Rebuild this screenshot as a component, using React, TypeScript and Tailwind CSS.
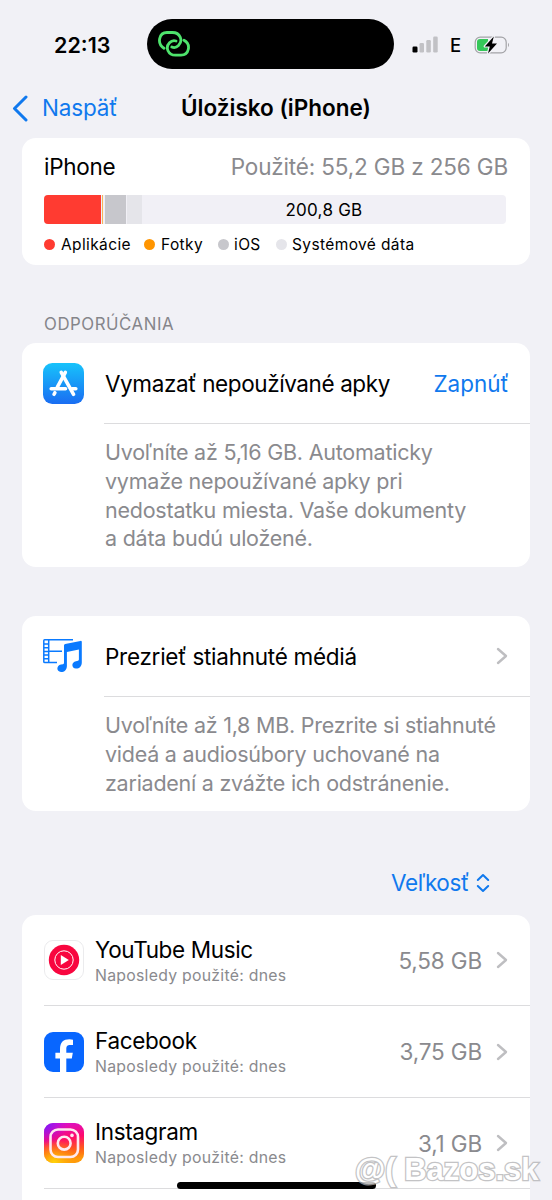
import React from 'react';

interface AppEntry {
    name: string;
    size: string;
    icon: React.ReactNode;
}

interface ChevronProps {
    className?: string;
}

const Chevron: React.FC<ChevronProps> = ({ className = '' }) => (
    <svg className={`h-[18px] w-[12px] shrink-0 ${className}`} viewBox="0 0 12 18" fill="none">
        <path d="M2 2 L10 9 L2 16" stroke="#bebec1" strokeWidth="2.4" strokeLinecap="round" strokeLinejoin="round" />
    </svg>
);

const AppStoreIcon: React.FC = () => (
    <svg className="-ml-px h-[41px] w-[41px] shrink-0" viewBox="0 0 40 40" fill="none">
        <defs>
            <linearGradient id="store" x1="0" y1="0" x2="0" y2="1">
                <stop offset="0" stopColor="#17c3fb" />
                <stop offset="1" stopColor="#1a6df2" />
            </linearGradient>
        </defs>
        <rect width="40" height="40" rx="9" fill="url(#store)" />
        <g stroke="#fff" strokeWidth="3.5" strokeLinecap="round">
            <path d="M21.8 9.2 L14 23.5" />
            <path d="M17.8 9.2 L29.8 30.5" />
            <path d="M8 25.2 H22" />
            <path d="M28.2 25.2 H32" />
            <path d="M11.6 29 L10.8 30.5" />
        </g>
    </svg>
);

const MediaIcon: React.FC = () => (
    <svg className="-ml-px mr-px h-10 w-10 shrink-0" viewBox="0 0 40 40" fill="none">
        <g stroke="#0a7aff" strokeWidth="1.5">
            <path d="M30 3.8 H1.6 Q0.8 3.8 0.8 4.8 V25.7 Q0.8 26.6 1.8 26.6 H14" />
            <path d="M5.7 4 V26.5 M5.7 15.2 H19" />
            <path d="M1 8 H5.7 M1 11.7 H5.7 M1 15.4 H5.7 M1 19.1 H5.7 M1 22.8 H5.7" />
        </g>
        <path d="M21 9.4 Q21 8.2 22.2 7.9 L37.4 4.9 Q38.8 4.7 38.8 6 V26.5 C38.8 30.4 36.3 32.7 33 32.6 C28.2 32.2 28.2 26 33 25.2 L35 24.8 Q35.9 24.5 35.9 23.5 V13.6 L23.9 16.1 V30 C23.9 33.8 21.3 36.2 18 36.1 C13.2 35.7 13.2 29.5 18 28.6 L20 28.2 Q21 27.9 21 26.8 Z" fill="#0a7aff" />
    </svg>
);

const YouTubeMusicIcon: React.FC = () => (
    <svg className="h-10 w-10 shrink-0" viewBox="0 0 40 40" fill="none">
        <rect x="0.5" y="0.5" width="39" height="39" rx="8.5" fill="#fff" stroke="#ebebed" />
        <circle cx="20" cy="20" r="15.2" fill="#f8063f" />
        <circle cx="20" cy="20" r="9.2" stroke="#fff" strokeWidth="1" />
        <path d="M16.8 15 L24.8 20 L16.8 25 Z" fill="#fff" />
    </svg>
);

const FacebookIcon: React.FC = () => (
    <svg className="h-10 w-10 shrink-0" viewBox="0 0 40 40">
        <rect width="40" height="40" rx="9" fill="#0866ff" />
        <path d="M16 40 V26.4 H11.4 V20.7 H16 V17.5 C16 10.2 19.5 7.3 25.4 7.3 Q27.5 7.3 29 7.7 V12.9 H26.4 C23.2 12.9 22.3 14.2 22.3 17.2 V20.7 H28.8 L27.8 26.4 H22.3 V40 Z" fill="#fff" />
    </svg>
);

const InstagramIcon: React.FC = () => (
    <svg className="h-10 w-10 shrink-0" viewBox="0 0 40 40" fill="none">
        <defs>
            <linearGradient id="ig-base" x1="0" y1="0" x2="0.15" y2="1">
                <stop offset="0" stopColor="#d411d8" />
                <stop offset="0.45" stopColor="#ff0a6c" />
                <stop offset="0.75" stopColor="#ff5a1c" />
                <stop offset="1" stopColor="#ff9a0a" />
            </linearGradient>
            <radialGradient id="ig-violet" cx="0" cy="0" r="0.6">
                <stop offset="0" stopColor="#6a1cff" />
                <stop offset="1" stopColor="#b010f0" stopOpacity="0" />
            </radialGradient>
            <radialGradient id="ig-yellow" cx="0.25" cy="1" r="0.6">
                <stop offset="0" stopColor="#ffd60a" />
                <stop offset="1" stopColor="#ff9a0a" stopOpacity="0" />
            </radialGradient>
        </defs>
        <rect width="40" height="40" rx="9" fill="url(#ig-base)" />
        <rect width="40" height="40" rx="9" fill="url(#ig-violet)" />
        <rect width="40" height="40" rx="9" fill="url(#ig-yellow)" />
        <rect x="6.5" y="6.5" width="27.5" height="27.5" rx="7.5" stroke="#ffe9f0" strokeWidth="2.6" />
        <circle cx="20.2" cy="20.2" r="6.4" stroke="#ffe9f0" strokeWidth="2.6" />
        <circle cx="28" cy="12.4" r="1.8" fill="#ffe9f0" />
    </svg>
);

const apps: AppEntry[] = [
    { name: 'YouTube Music', size: '5,58 GB', icon: <YouTubeMusicIcon /> },
    { name: 'Facebook', size: '3,75 GB', icon: <FacebookIcon /> },
    { name: 'Instagram', size: '3,1 GB', icon: <InstagramIcon /> },
];

const StatusBar: React.FC = () => (
    <div className="flex h-[50px] items-center">
        <span className="ml-[54px] w-[93px] pt-0.5 text-[21.5px] font-semibold">22:13</span>
        <div className="flex h-[50px] w-[247px] items-center rounded-full bg-black pl-[11px]">
            <svg className="h-[26px] w-8" viewBox="0 0 32 26" fill="none" stroke="#4ee36c" strokeWidth="2.8" strokeLinecap="round">
                <path d="M6 17.3 C-1.5 12.5 1 1.5 9 1.5 H14.5 C22 1.5 25.5 9.5 20.5 14.5 C18.5 16.5 16 17 13.8 16" />
                <path d="M26 9.3 C33.5 13.5 31 24.2 23 24.2 H17.5 C10 24.2 7 16.5 11.5 11.8 C13.5 9.7 15.8 9.2 18 10" />
            </svg>
        </div>
        <svg className="mt-px ml-[18px] h-[17px] w-[26px]" viewBox="0 0 26 17">
            <rect x="0.5" y="10.5" width="5" height="6" rx="1.2" fill="#000" />
            <rect x="7.5" y="7" width="4.5" height="9.5" rx="1.2" fill="#c1c1c5" />
            <rect x="14.3" y="4" width="4.5" height="12.5" rx="1.2" fill="#c1c1c5" />
            <rect x="21.2" y="0.5" width="4.5" height="16" rx="1.2" fill="#c1c1c5" />
        </svg>
        <span className="ml-[12px] w-[24px] pt-[3px] text-[18.5px] font-medium">E</span>
        <svg className="mt-px h-[20px] w-[37px]" viewBox="0 0 37 20" fill="none">
            <rect x="1.2" y="2.2" width="31" height="15.6" rx="5" stroke="#a3a3a7" strokeWidth="1.2" />
            <path d="M6 4 H14 V16 H6 Q3 16 3 13 V7 Q3 4 6 4 Z" fill="#35c759" />
            <path d="M34 7.8 Q36 10 34 12.2 Z" fill="#a3a3a7" />
            <path d="M19.8 1.5 L10.8 11.4 H15.8 L14 18.5 L23 8.6 H18 Z" fill="#000" stroke="#f1f1f6" strokeWidth="2.4" strokeLinejoin="round" paintOrder="stroke" />
        </svg>
    </div>
);

const StorageCard: React.FC = () => (
    <section className="mx-[22px] h-[127px] rounded-[14px] bg-white px-[22px] pt-[14px]">
        <div className="flex h-[29px] items-center justify-between text-[22.5px]">
            <span className="tracking-[-0.3px]">iPhone</span>
            <span className="tracking-[-0.15px] text-[#8a8a8e]">Použité: 55,2 GB z 256 GB</span>
        </div>
        <div className="mt-[14px] flex h-[29px] w-[462px] overflow-hidden rounded-[4px] bg-[#f1f0f6]">
            <div className="w-[57px] bg-[#ff3b31]" />
            <div className="mx-px w-px bg-[#f7b558]" />
            <div className="ml-px w-[21px] bg-[#c7c7cc]" />
            <div className="ml-px w-[15px] bg-[#e5e5ea]" />
            <div className="flex flex-1 items-center justify-center pt-0.5 text-[17px] tracking-[0.25px]">200,8 GB</div>
        </div>
        <div className="mt-[9px] flex h-[22px] items-center pt-px text-[15.5px] tracking-[0.38px]">
            <span className="mr-[6px] h-[11px] w-[11px] rounded-full bg-[#ff3b31]" />
            <span className="w-[83px]">Aplikácie</span>
            <span className="mr-[6px] h-[11px] w-[11px] rounded-full bg-[#ff9500]" />
            <span className="w-[57px]">Fotky</span>
            <span className="mr-[5px] h-[11px] w-[11px] rounded-full bg-[#c7c7cc]" />
            <span className="w-[42px]">iOS</span>
            <span className="mr-[5px] h-[11px] w-[11px] rounded-full bg-[#e5e5ea]" />
            <span>Systémové dáta</span>
        </div>
    </section>
);

export default function App() {
    return (
        <main className="relative h-[1200px] w-[552px] overflow-hidden bg-[#f1f1f6] pt-[19px] font-['Inter',sans-serif] text-black">
            <StatusBar />

            <nav className="relative flex h-[69px] items-center justify-center pt-[9px]">
                <div className="absolute left-3 flex items-center text-[#1079ee]">
                    <svg className="h-[27px] w-4" viewBox="0 0 16 27" fill="none">
                        <path d="M14 2 L2.5 13.5 L14 25" stroke="currentColor" strokeWidth="3" strokeLinecap="round" strokeLinejoin="round" />
                    </svg>
                    <span className="ml-[14px] text-[22.5px] tracking-[-0.15px]">Naspäť</span>
                </div>
                <h1 className="text-[22.5px] font-semibold">Úložisko (iPhone)</h1>
            </nav>

            <StorageCard />

            <h2 className="mt-[47px] ml-[44px] h-[31px] text-[16.8px] leading-[24px] tracking-[0.55px] text-[#85858a]">ODPORÚČANIA</h2>

            <section className="mx-[22px] h-[224px] rounded-[14px] bg-white pl-[22px]">
                <div className="flex h-20 items-center">
                    <AppStoreIcon />
                    <span className="ml-[21px] pt-0.5 text-[22.5px] tracking-[-0.4px]">Vymazať nepoužívané apky</span>
                    <span className="mr-[21px] ml-auto pt-0.5 text-[22.5px] text-[#1079ee]">Zapnúť</span>
                </div>
                <p className="ml-[60px] border-t border-[#dcdcde] pt-[14px] pl-px text-[21.5px] leading-[28.8px] tracking-[-0.23px] text-[#8a8a8e]">
                    Uvoľníte až 5,16 GB. Automaticky<br />
                    vymaže nepoužívané apky pri<br />
                    nedostatku miesta. Vaše dokumenty<br />
                    a dáta budú uložené.
                </p>
            </section>

            <section className="mx-[22px] mt-[49px] h-[195px] rounded-[14px] bg-white pl-[22px]">
                <div className="flex h-20 items-center">
                    <MediaIcon />
                    <span className="ml-[21px] pt-0.5 text-[22.5px] tracking-[-0.27px]">Prezrieť stiahnuté médiá</span>
                    <Chevron className="mr-[22px] ml-auto" />
                </div>
                <p className="ml-[60px] border-t border-[#dcdcde] pt-[14px] pl-px text-[21.5px] leading-[28.8px] tracking-[-0.25px] text-[#8a8a8e]">
                    Uvoľníte až 1,8 MB. Prezrite si stiahnuté<br />
                    videá a audiosúbory uchované na<br />
                    zariadení a zvážte ich odstránenie.
                </p>
            </section>

            <div className="mt-[58px] mr-[62px] flex h-[28px] items-center justify-end text-[#1079ee]">
                <span className="text-[22.5px] tracking-[-0.4px]">Veľkosť</span>
                <svg className="ml-[7px] h-[20px] w-[14px]" viewBox="0 0 14 20" fill="none" stroke="currentColor" strokeWidth="2" strokeLinecap="round" strokeLinejoin="round">
                    <path d="M1.8 7 L7 2 L12.2 7 M1.8 13 L7 18 L12.2 13" />
                </svg>
            </div>

            <section className="mx-[22px] mt-[18px] h-[300px] rounded-t-[14px] bg-white pl-[22px]">
                {apps.map((app) => (
                    <div key={app.name} className="flex h-[91.4px] items-center border-b border-[#dcdcde]">
                        {app.icon}
                        <div className="ml-[11px] pt-[3px]">
                            <div className="text-[22.5px] leading-[27px] tracking-[-0.35px]">{app.name}</div>
                            <div className="text-[15.8px] leading-[25px] tracking-[0.27px] text-[#8a8a8e]">Naposledy použité: dnes</div>
                        </div>
                        <span className="mr-[14px] ml-auto pt-px text-[22.5px] tracking-[-0.15px] text-[#8a8a8e]">{app.size}</span>
                        <Chevron className="mr-[22px]" />
                    </div>
                ))}
            </section>

            <div className="absolute top-[1182px] left-[177px] h-[7px] w-[199px] rounded-full bg-black" />

            <div className="absolute top-[1158px] left-[355px] font-['Liberation_Sans',sans-serif] text-[31px] leading-[24px] font-bold whitespace-nowrap text-white opacity-75 [-webkit-text-stroke:2.6px_#b0b0b2] [paint-order:stroke_fill]">
                @( Bazos.sk
            </div>
        </main>
    );
}
